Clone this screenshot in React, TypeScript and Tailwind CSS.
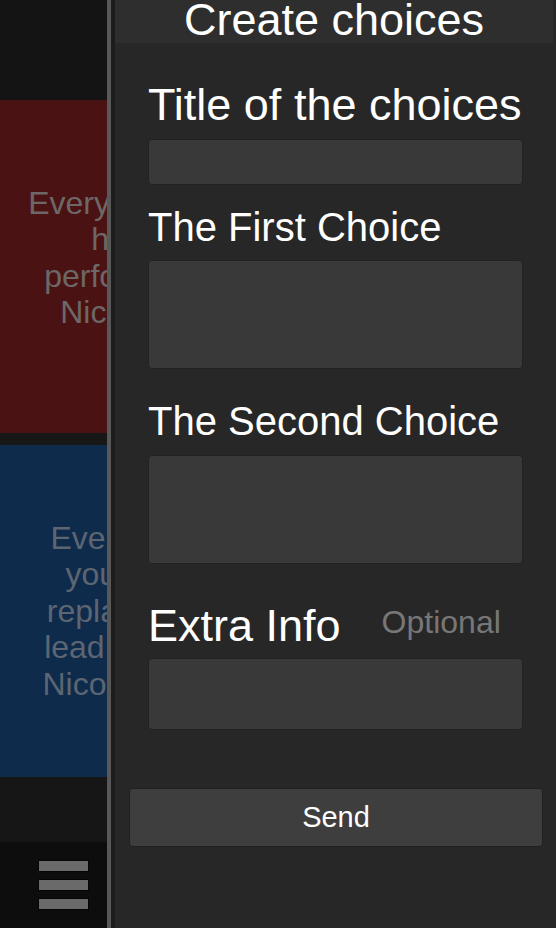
import React from "react"

const font = "font-['Liberation_Sans',Arial,sans-serif]"

function Card({ lines, color, text, extra }: { lines: string[]; color: string; text: string; extra: string }) {
  return (
    <div className={`w-[252px] shrink-0 flex items-center justify-center ${color} ${extra}`}>
      <p className={`text-center text-[32px] leading-[36.5px] whitespace-nowrap ${text}`}>
        {lines.map((l, i) => (
          <span key={i} className="block">
            {l}
          </span>
        ))}
      </p>
    </div>
  )
}

function Field({ h }: { h: string }) {
  return <div className={`w-full ${h} rounded-[4px] bg-[#393939] border border-[#222222]`} />
}

export default function App() {
  return (
    <div className={`w-[556px] h-[928px] overflow-hidden flex bg-[#141414] ${font}`}>
      {/* page behind the drawer */}
      <div className="w-[107px] shrink-0 overflow-hidden flex flex-col items-start">
        <div className="h-[100px] w-full shrink-0 bg-[#141414]" />
        <Card
          lines={["Everyone has", "have", "perform the", "Nicholas."]}
          color="bg-[#4a1212] h-[333px]"
          text="text-[#6d6767]"
          extra="pb-[18px]"
        />
        <div className="h-[12px] w-full shrink-0 bg-[#171717]" />
        <Card
          lines={["Everybody", "you may", "replace the", "lead singer,", "Nicolas role"]}
          color="bg-[#0f2b4b] h-[332px]"
          text="text-[#5c6572]"
          extra=""
        />
        <div className="h-[65px] w-full shrink-0 bg-[#161616]" />
        <div className="h-[86px] w-full shrink-0 bg-[#0d0d0d] pt-[19px] pl-[39px] flex flex-col gap-[9px]">
          <div className="w-[49px] h-[10px] bg-[#6a6a6a] outline outline-1 outline-[#050505]" />
          <div className="w-[49px] h-[10px] bg-[#6a6a6a] outline outline-1 outline-[#050505]" />
          <div className="w-[49px] h-[10px] bg-[#6a6a6a] outline outline-1 outline-[#050505]" />
        </div>
      </div>

      <div className="w-[4px] shrink-0 bg-[#585858]" />
      <div className="w-[4px] shrink-0 bg-[#1c1c1c]" />

      {/* drawer */}
      <div className="flex-1 bg-[#272727] flex flex-col">
        <div className="h-[43px] mr-[3px] bg-[#2e2e2e] flex justify-center">
          <h1 className="text-white text-[45px] leading-[39px] whitespace-nowrap">Create choices</h1>
        </div>

        <div className="px-[33px] flex flex-col">
          <div className="mt-[39px] text-white text-[45px] leading-none whitespace-nowrap">Title of the choices</div>
          <div className="mt-[12px]">
            <Field h="h-[46px]" />
          </div>

          <div className="mt-[22px] text-white text-[40px] leading-none whitespace-nowrap">The First Choice</div>
          <div className="mt-[13px]">
            <Field h="h-[109px]" />
          </div>

          <div className="mt-[32px] text-white text-[40px] leading-none whitespace-nowrap">The Second Choice</div>
          <div className="mt-[14px]">
            <Field h="h-[109px]" />
          </div>

          <div className="mt-[39px] flex items-start whitespace-nowrap">
            <span className="text-white text-[45px] leading-none">Extra Info</span>
            <span className="ml-[41px] mt-[3px] text-[#777777] text-[32px] leading-none">Optional</span>
          </div>
          <div className="mt-[10px]">
            <Field h="h-[72px]" />
          </div>

          <button className="mt-[58px] ml-[-19px] mr-[-20px] h-[59px] rounded-[4px] bg-[#3e3e3e] border border-[#1f1f1f] flex items-center justify-center text-white text-[29px] leading-none">
            Send
          </button>
        </div>
      </div>
    </div>
  )
}
